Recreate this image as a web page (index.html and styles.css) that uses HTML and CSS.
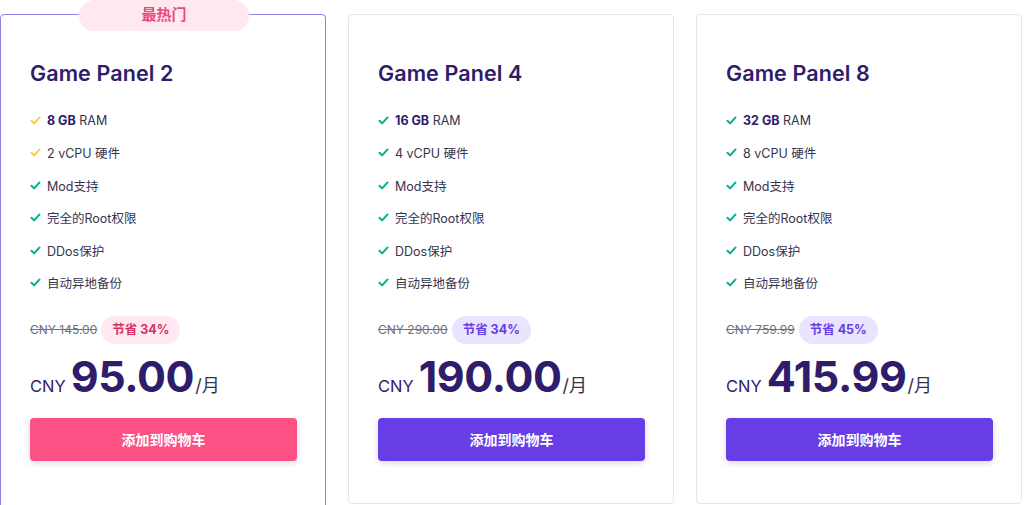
FILE: index.html
```html
<!DOCTYPE html>
<html lang="zh-CN">
<head>
<meta charset="utf-8">
<title>Game Panel</title>
<link rel="stylesheet" href="styles.css">
</head>
<body>
<div class="plans">
  <div class="card featured">
    <div class="ribbon">最热门</div>
    <h2 class="title">Game Panel 2</h2>
    <ul class="features">
      <li><svg class="check yellow" viewBox="0 0 12 10"><path d="M1.5 5.2l3 3 6-6.6"/></svg><span><b>8 GB</b> RAM</span></li>
      <li><svg class="check yellow" viewBox="0 0 12 10"><path d="M1.5 5.2l3 3 6-6.6"/></svg><span>2 vCPU 硬件</span></li>
      <li><svg class="check" viewBox="0 0 12 10"><path d="M1.5 5.2l3 3 6-6.6"/></svg><span>Mod支持</span></li>
      <li><svg class="check" viewBox="0 0 12 10"><path d="M1.5 5.2l3 3 6-6.6"/></svg><span>完全的Root权限</span></li>
      <li><svg class="check" viewBox="0 0 12 10"><path d="M1.5 5.2l3 3 6-6.6"/></svg><span>DDos保护</span></li>
      <li><svg class="check" viewBox="0 0 12 10"><path d="M1.5 5.2l3 3 6-6.6"/></svg><span>自动异地备份</span></li>
    </ul>
    <div class="old-row"><s class="old">CNY 145.00</s><span class="save pink">节省 34%</span></div>
    <div class="price"><span class="cur">CNY</span><span class="amount">95.00</span><span class="per">/月</span></div>
    <button class="btn pink-btn">添加到购物车</button>
  </div>
  <div class="card">
    <h2 class="title">Game Panel 4</h2>
    <ul class="features">
      <li><svg class="check" viewBox="0 0 12 10"><path d="M1.5 5.2l3 3 6-6.6"/></svg><span><b>16 GB</b> RAM</span></li>
      <li><svg class="check" viewBox="0 0 12 10"><path d="M1.5 5.2l3 3 6-6.6"/></svg><span>4 vCPU 硬件</span></li>
      <li><svg class="check" viewBox="0 0 12 10"><path d="M1.5 5.2l3 3 6-6.6"/></svg><span>Mod支持</span></li>
      <li><svg class="check" viewBox="0 0 12 10"><path d="M1.5 5.2l3 3 6-6.6"/></svg><span>完全的Root权限</span></li>
      <li><svg class="check" viewBox="0 0 12 10"><path d="M1.5 5.2l3 3 6-6.6"/></svg><span>DDos保护</span></li>
      <li><svg class="check" viewBox="0 0 12 10"><path d="M1.5 5.2l3 3 6-6.6"/></svg><span>自动异地备份</span></li>
    </ul>
    <div class="old-row"><s class="old">CNY 290.00</s><span class="save">节省 34%</span></div>
    <div class="price"><span class="cur">CNY</span><span class="amount">190.00</span><span class="per">/月</span></div>
    <button class="btn">添加到购物车</button>
  </div>
  <div class="card">
    <h2 class="title">Game Panel 8</h2>
    <ul class="features">
      <li><svg class="check" viewBox="0 0 12 10"><path d="M1.5 5.2l3 3 6-6.6"/></svg><span><b>32 GB</b> RAM</span></li>
      <li><svg class="check" viewBox="0 0 12 10"><path d="M1.5 5.2l3 3 6-6.6"/></svg><span>8 vCPU 硬件</span></li>
      <li><svg class="check" viewBox="0 0 12 10"><path d="M1.5 5.2l3 3 6-6.6"/></svg><span>Mod支持</span></li>
      <li><svg class="check" viewBox="0 0 12 10"><path d="M1.5 5.2l3 3 6-6.6"/></svg><span>完全的Root权限</span></li>
      <li><svg class="check" viewBox="0 0 12 10"><path d="M1.5 5.2l3 3 6-6.6"/></svg><span>DDos保护</span></li>
      <li><svg class="check" viewBox="0 0 12 10"><path d="M1.5 5.2l3 3 6-6.6"/></svg><span>自动异地备份</span></li>
    </ul>
    <div class="old-row"><s class="old">CNY 759.99</s><span class="save">节省 45%</span></div>
    <div class="price"><span class="cur">CNY</span><span class="amount">415.99</span><span class="per">/月</span></div>
    <button class="btn">添加到购物车</button>
  </div>
</div>
</body>
</html>
```
FILE: styles.css
```css
* { box-sizing: border-box; }
html, body { margin: 0; padding: 0; background: #fff; overflow: hidden; }
body {
  font-family: "Inter", "Noto Sans CJK SC", sans-serif;
  color: #36344d;
}
.plans {
  display: flex;
  gap: 22px;
  align-items: flex-start;
  padding-top: 14px;
}
.card {
  position: relative;
  width: 326px;
  flex: none;
  border: 1px solid #e5e5ef;
  border-radius: 4px;
  background: #fff;
  padding: 46px 28px 42px 29px;
}
.card.featured {
  border-color: #8c85e8;
  padding-bottom: 80px;
}
.ribbon {
  position: absolute;
  top: -15px;
  left: 78px;
  width: 170px;
  height: 31px;
  border-radius: 16px;
  background: #ffe8ef;
  color: #ec4a7c;
  font-size: 15px;
  font-weight: 700;
  text-align: center;
  line-height: 29px;
}
.title {
  margin: 0;
  font-size: 21.5px;
  line-height: 24px;
  font-weight: 600;
  color: #2f1c6a;
  letter-spacing: 0.1px;
}
.features {
  list-style: none;
  margin: 25px 0 0;
  padding: 0;
}
.features li {
  display: flex;
  align-items: center;
  height: 20px;
  margin-bottom: 12.6px;
  font-size: 12.5px;
}
.features li:last-child { margin-bottom: 0; }
.features b { font-weight: 700; color: #2f1c6a; }
.check {
  width: 11px;
  height: 9px;
  margin-right: 6px;
  fill: none;
  stroke: #00b090;
  stroke-width: 2.2;
  stroke-linecap: round;
  stroke-linejoin: round;
}
.check.yellow { stroke: #ffcd35; }
.old-row {
  display: flex;
  align-items: center;
  margin-top: 23px;
  height: 28px;
}
.old {
  font-size: 12px;
  color: #6d7081;
  margin-right: 4px;
}
.save {
  display: inline-block;
  height: 28px;
  line-height: 28px;
  padding: 0 11px;
  border-radius: 14px;
  background: #ebe4ff;
  color: #673de6;
  font-size: 12.5px;
  font-weight: 700;
}
.save.pink { background: #ffe8ef; color: #d63163; }
.price {
  display: flex;
  align-items: baseline;
  margin-top: 6px;
  height: 50px;
  color: #2f1c6a;
}
.cur { font-size: 16.5px; margin-right: 5px; color: #2f1c6a; }
.amount { font-size: 43px; font-weight: 700; letter-spacing: -0.4px; }
.per { font-size: 18px; color: #36344d; margin-left: 1px; }
.btn {
  display: block;
  width: 267px;
  height: 43px;
  margin-top: 18px;
  border: none;
  border-radius: 4px;
  background: #673de6;
  color: #fff;
  font-family: "Inter", "Noto Sans CJK SC", sans-serif;
  font-size: 14px;
  font-weight: 700;
  box-shadow: 0 2px 6px rgba(47, 28, 106, 0.18);
}
.btn.pink-btn { background: #fc5185; }
```
